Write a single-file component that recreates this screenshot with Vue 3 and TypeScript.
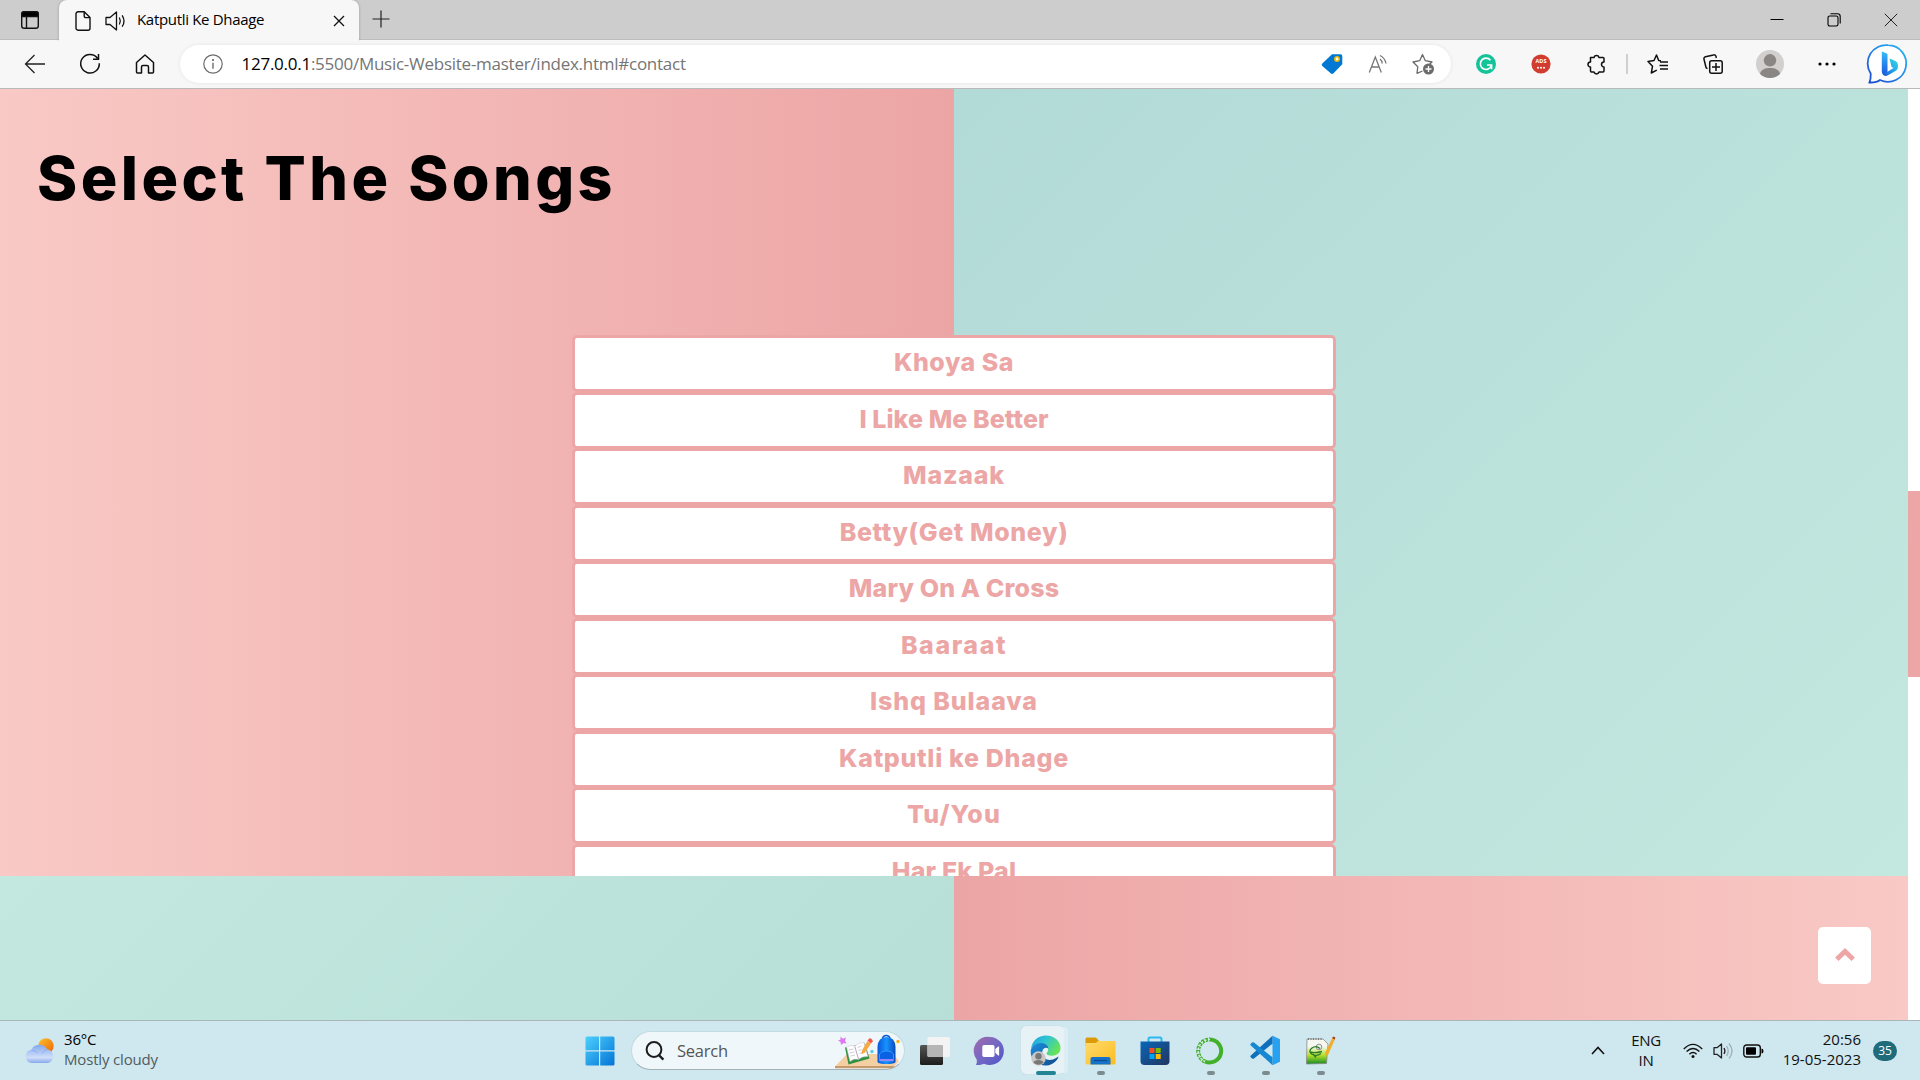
<script setup lang="ts">
interface Song {
  title: string
  spacing: number
}

const songs: Song[] = [
  { title: 'Khoya Sa', spacing: 0.5 },
  { title: 'I Like Me Better', spacing: 0.1 },
  { title: 'Mazaak', spacing: 0.8 },
  { title: 'Betty(Get Money)', spacing: 0.62 },
  { title: 'Mary On A Cross', spacing: 0.15 },
  { title: 'Baaraat', spacing: 1.6 },
  { title: 'Ishq Bulaava', spacing: 0.9 },
  { title: 'Katputli ke Dhage', spacing: 0.68 },
  { title: 'Tu/You', spacing: 1.1 },
  { title: 'Har Ek Pal', spacing: 0.2 },
]
</script>

<template>
  <div class="screen">
    <header class="tabs">
      <div class="tab-actions">
        <svg width="20" height="20" viewBox="0 0 20 20" fill="none" stroke="#111" stroke-width="1.4">
          <rect x="1.7" y="1.7" width="16.6" height="16.6" rx="2.6" />
          <path d="M1.7 6.5V4.2a2.5 2.5 0 0 1 2.5-2.5h11.6a2.5 2.5 0 0 1 2.5 2.5v2.3z" fill="#000" />
          <path d="M6.5 6v12" />
        </svg>
      </div>
      <div class="tab">
        <svg class="doc" width="16" height="20" viewBox="0 0 16 20" fill="none" stroke="#111" stroke-width="1.4" stroke-linejoin="round">
          <path d="M3 .8h6.2l5.8 5.8v10.6a2 2 0 0 1-2 2H3a2 2 0 0 1-2-2V2.8a2 2 0 0 1 2-2z" />
          <path d="M9.2.8v4.3a1.5 1.5 0 0 0 1.5 1.5H15" />
        </svg>
        <svg class="speaker" width="21" height="20" viewBox="0 0 21 20" fill="none" stroke="#111" stroke-width="1.3" stroke-linejoin="round" stroke-linecap="round">
          <path d="M1 6.5h4L11.5 1v18L5 13.5H1z" />
          <path d="M14.5 7q1.6 3 0 6M17.4 4.8q3.200 5.200 0 10.400" />
        </svg>
        <span class="tab-title">Katputli Ke Dhaage</span>
        <svg class="tab-close" width="12" height="12" viewBox="0 0 12 12" stroke="#111" stroke-width="1.3"><path d="M1 1l10 10M11 1L1 11" /></svg>
      </div>
      <svg class="new-tab" width="18" height="18" viewBox="0 0 18 18" stroke="#222" stroke-width="1.2"><path d="M9 .5v17M.5 9h17" /></svg>
      <div class="window-buttons">
        <svg width="14" height="14" viewBox="0 0 14 14" stroke="#000" stroke-width="1"><path d="M.5 6.500h13" /></svg>
        <svg width="14" height="14" viewBox="0 0 14 14" fill="none" stroke="#000" stroke-width="1.1">
          <rect x="1" y="3" width="10" height="10" rx="1.7" /><path d="M3.500.8H10.500a2.700 2.700 0 0 1 2.700 2.700V10.500" />
        </svg>
        <svg width="14" height="14" viewBox="0 0 14 14" stroke="#222" stroke-width="1"><path d="M.8.8l12.400 12.400M13.200.8L.8 13.200" /></svg>
      </div>
    </header>

    <nav class="toolbar">
      <div class="slot nav-slot">
        <svg width="22" height="20" viewBox="0 0 22 20" fill="none" stroke="#222" stroke-width="1.3"><path d="M10.500 1L1.500 10l9 9M1.500 10H21" /></svg>
      </div>
      <div class="slot nav-slot">
        <svg width="22" height="22" viewBox="0 0 22 22" fill="none" stroke="#111" stroke-width="1.5"><path d="M20.300 10.200A9.300 9.300 0 1 1 18.500 5.200M19.500 1v5.200h-5.500" /></svg>
      </div>
      <div class="slot nav-slot">
        <svg width="20" height="20" viewBox="0 0 20 20" fill="none" stroke="#111" stroke-width="1.5" stroke-linejoin="round"><path d="M1.500 8.500L10 1l8.500 7.500V18a1 1 0 0 1-1 1h-4v-6a1.500 1.500 0 0 0-1.500-1.500H8A1.500 1.500 0 0 0 6.500 13v6h-4a1 1 0 0 1-1-1z" /></svg>
      </div>
      <div class="address">
        <svg class="info" width="20" height="20" viewBox="0 0 20 20" fill="none" stroke="#6b6b6b" stroke-width="1.2">
          <circle cx="10" cy="10" r="9.200" /><path d="M10 8.800v6" stroke-width="1.400" /><circle cx="10" cy="6" r=".5" fill="#6b6b6b" />
        </svg>
        <span class="url"><b>127.0.0.1</b>:5500/Music-Website-master/index.html#contact</span>
        <div class="address-tools">
          <svg width="22" height="22" viewBox="0 0 22 22"><path d="M11 1.300h8.500a1.800 1.800 0 0 1 1.800 1.800v8.200L12.500 20.300a2 2 0 0 1-2.800 0L1.300 13a1.800 1.800 0 0 1 0-2.600z" fill="#0078d4" /><circle cx="16" cy="6" r="2.200" fill="#fff" stroke="#f2b600" stroke-width="1.600" /></svg>
          <svg width="20" height="20" viewBox="0 0 20 20" fill="none" stroke="#777" stroke-width="1.300"><path d="M1.300 18.500L7.300 3l6 15.500M3.500 13h7.700M12 5q2 1.500 2.200 4.500M12 1.500q5 2.500 6 8" /></svg>
          <svg width="22" height="22" viewBox="0 0 22 22" fill="none" stroke="#6b6b6b" stroke-width="1.300" stroke-linejoin="round">
            <path d="M10.500 18L5 20.300l.8-6.600L1 9l6.700-1.300L10.500 1.500l2.800 6.200L20 9l-2.500 2.200" /><circle cx="16.500" cy="16" r="5.500" fill="#6b6b6b" stroke="none" /><path d="M13.500 16h6M16.500 13v6" stroke="#fff" />
          </svg>
        </div>
      </div>
      <div class="extensions">
        <svg width="20" height="20" viewBox="0 0 20 20"><circle cx="10" cy="10" r="10" fill="#15c39a" /><path d="M14.500 6.200A5.700 5.700 0 1 0 15.500 11.500M11 11h4.600v4.200" fill="none" stroke="#fff" stroke-width="1.600" /></svg>
        <svg width="20" height="20" viewBox="0 0 20 20"><circle cx="10" cy="10" r="9.600" fill="#d23b30" /><text x="10" y="9.200" text-anchor="middle" class="ads">ADS</text><g fill="#fff"><circle cx="7" cy="13.700" r="1" /><circle cx="10" cy="13.700" r="1" /><circle cx="13" cy="13.700" r="1" /></g></svg>
        <svg width="21" height="21" viewBox="0 0 21 21" fill="none" stroke="#111" stroke-width="1.500" stroke-linejoin="round"><path d="M4.500 3.500H8a2.600 2.600 0 0 1 5 0h4a1 1 0 0 1 1 1V8a2.500 2.500 0 0 0 0 5v4a1 1 0 0 1-1 1h-4a2.600 2.600 0 0 1-5 0H5.500a1 1 0 0 1-1-1V13a2.500 2.500 0 0 1 0-5z" /></svg>
      </div>
      <i class="divider"></i>
      <div class="browser-tools">
        <svg width="22" height="20" viewBox="0 0 22 20" fill="none" stroke="#111" stroke-width="1.500" stroke-linejoin="round"><path d="M14 6.800l-2.300-.3L9.500 1 7 6.500 1 7.500l4.500 4.800L4.300 19l5.500-2.800M13 8h8M12.500 11.500H21M13 15h8" /></svg>
        <svg width="20" height="20" viewBox="0 0 20 20" fill="none" stroke="#111" stroke-width="1.500"><rect x="6.700" y="6.700" width="12.500" height="12.500" rx="2" /><path d="M13 9v8M9 13h8M4.500 14.500a2 2 0 0 1-1.600-1.500L1 5.200a2 2 0 0 1 1.500-2.500L10.500.9A2 2 0 0 1 13 2.400L13.300 4" /></svg>
        <svg width="28" height="28" viewBox="0 0 28 28"><circle cx="14" cy="14" r="14" fill="#d2d0ce" /><circle cx="14" cy="10.300" r="6.200" fill="#8a8683" /><path d="M4 24c1-5 5.500-6 10-6s9 1 10 6c-5.500 5.200-14.500 5.200-20 0z" fill="#8a8683" /></svg>
        <svg width="18" height="4" viewBox="0 0 18 4"><circle cx="2" cy="2" r="1.600" /><circle cx="9" cy="2" r="1.600" /><circle cx="16" cy="2" r="1.600" /></svg>
      </div>
      <svg class="bing" width="40" height="40" viewBox="0 0 40 40">
        <defs>
          <linearGradient id="ring" x1="1" y1="0" x2="0" y2="1"><stop offset="0" stop-color="#26b8f4" /><stop offset=".5" stop-color="#2584e8" /><stop offset="1" stop-color="#1b48cc" /></linearGradient>
          <linearGradient id="stem" x1="0" y1="0" x2="0" y2="1"><stop offset="0" stop-color="#35bdfb" /><stop offset="1" stop-color="#1b5be0" /></linearGradient>
          <linearGradient id="bow" x1="1" y1="0" x2="0" y2="1"><stop offset="0" stop-color="#3be0d8" /><stop offset=".5" stop-color="#20a4f0" /><stop offset="1" stop-color="#1d4bd0" /></linearGradient>
        </defs>
        <path d="M20 1.200a18.300 18.300 0 1 1-8 34.800c-3 2.500-6.500 2.600-10.500 2.500 1.500-3 1.200-6 1.200-9A18.300 18.300 0 0 1 20 1.200z" fill="#fff" stroke="url(#ring)" stroke-width="1.800" />
        <path d="M13.800 7.500l4.500 1.700c.8.300 1.200 1 1.200 1.700V28l-3 2c-1.600.2-2.700-1-2.700-2.500z" fill="url(#stem)" />
        <path d="M21.500 14.500l6 2.600a4.500 4.500 0 0 1 2.500 4v1.500c0 2-.8 3.200-2.200 4.200L19.500 31.500c-2.800 1.300-5-.5-5.500-3 1.800 1 3.600.4 5.500-.7l6-3.800-2-1.200z" fill="url(#bow)" />
      </svg>
    </nav>

    <main class="page">
      <div class="content">
        <section class="songs-section">
          <h1>Select The Songs</h1>
          <ul class="songs">
            <li v-for="song in songs" :key="song.title">
              <button><span :style="{ letterSpacing: song.spacing + 'px' }">{{ song.title }}</span></button>
            </li>
          </ul>
        </section>
        <section class="next-section"></section>
        <a class="to-top"><svg width="20" height="14" viewBox="0 0 20 14" fill="none" stroke="#eda6a6" stroke-width="4.800"><path d="M1.800 11.300L10 3.400l8.200 7.900" /></svg></a>
      </div>
      <div class="scrollbar"><div class="thumb"></div></div>
    </main>

    <footer class="taskbar">
      <div class="weather">
        <svg width="32" height="28" viewBox="0 0 32 28">
          <defs>
            <linearGradient id="sun" x1="0" y1="0" x2="1" y2="1"><stop offset="0" stop-color="#f9c22b" /><stop offset="1" stop-color="#f0620a" /></linearGradient>
            <linearGradient id="cloud" x1="0" y1="0" x2="0" y2="1"><stop offset="0" stop-color="#83a9ef" /><stop offset=".7" stop-color="#cfdef9" /><stop offset="1" stop-color="#87a9ec" /></linearGradient>
          </defs>
          <circle cx="22" cy="9" r="7.700" fill="url(#sun)" />
          <path d="M7.500 26a6.700 6.700 0 0 1-.3-13.200A9 9 0 0 1 23 12.200 7.100 7.100 0 0 1 24 26z" fill="url(#cloud)" />
          <path d="M7.500 13.500q4-.3 6 2.500M18 16.500q2-3.500 5.500-4" fill="none" stroke="#8eb0ef" />
        </svg>
        <div class="weather-text"><span>36°C</span><span class="muted">Mostly cloudy</span></div>
      </div>

      <div class="apps">
        <svg class="start" width="30" height="30" viewBox="0 0 30 30">
          <defs><linearGradient id="win" x1="0" y1="0" x2="1" y2="1"><stop offset="0" stop-color="#4cd0fd" /><stop offset="1" stop-color="#0473d6" /></linearGradient></defs>
          <path d="M2 .5h12v13.800H.5V2A1.500 1.500 0 0 1 2 .5zM15.200.5H28A1.500 1.500 0 0 1 29.500 2v12.300H15.200zM.5 15.500H14v14H2A1.500 1.500 0 0 1 .5 28zM15.200 15.500h14.300V28a1.500 1.500 0 0 1-1.500 1.500H15.200z" fill="url(#win)" />
        </svg>
        <div class="search">
          <svg class="lens" width="20" height="20" viewBox="0 0 20 20" fill="none" stroke="#1d1d1d" stroke-width="2"><circle cx="9" cy="8.500" r="7.400" /><path d="M13.800 14l4.600 4.700" stroke-width="2.400" /></svg>
          <span>Search</span>
          <svg class="desk" width="70" height="36" viewBox="0 0 70 36">
            <defs><linearGradient id="bag" x1="0" y1="0" x2="1" y2="0"><stop offset="0" stop-color="#0b57d8" /><stop offset=".5" stop-color="#1693ff" /><stop offset="1" stop-color="#0a48b9" /></linearGradient></defs>
            <path d="M1 33.500L13 21h46l6 7-5 5.500z" fill="#f3cfa3" /><path d="M1 33h60l-3 2.300H1z" fill="#c79a6c" />
            <path d="M11 14.500l20-4 4.500 15-21 6z" fill="#2e9140" /><path d="M12.500 14q5-2.500 8.500-1 4-4 9-3.500l4 14q-6-.5-9.500 3-4-1.500-8.500 2z" fill="#fff" stroke="#c6bad4" stroke-width=".5" /><path d="M20.800 13.500l3.700 12.500" fill="none" stroke="#9a90ad" stroke-width=".8" /><path d="M14.500 17l5-1M15.500 20l5-1M16.500 23l4.500-1M23.500 14.500l4-1.500M24.500 17.500l3-1M25.500 20.500l5-1.500" fill="none" stroke="#c0b8cc" stroke-width=".7" />
            <path d="M28 17.500l5.500-9.500 3.500 2.400-6 9-3.500 1.800z" fill="#f7a940" /><path d="M33.500 7.500l2-2.200q3 .4 3.200 3L37 10.400z" fill="#ef5a50" />
            <path d="M6.500 3.500l2.300 2.300L12 4.500l-1 3.200 1.700 2.800-3.200-.6-2.500 2L6.600 9 4 7.500l2.600-1z" fill="#dd78f2" />
            <path d="M48.500 5a4 4 0 0 1 7.500 0" fill="none" stroke="#0c55c8" stroke-width="1.500" /><path d="M43.500 14q.5-10 9-10t9 10v15q-1 2-9 2t-9-2z" fill="url(#bag)" /><path d="M45.500 21q1.500-3 7-3t7 3v7H45.500z" fill="#0b61e4" stroke="#33a5ff" stroke-width=".8" /><path d="M46 27h13" stroke="#a68bff" stroke-width="1.800" />
            <circle cx="38" cy="18.500" r="1.700" fill="#53cfe4" /><circle cx="64" cy="8.500" r="1.700" fill="#ffad12" />
          </svg>
        </div>
        <div class="app">
          <svg width="30" height="30" viewBox="0 0 30 30"><defs><linearGradient id="tv" x1="0" y1="0" x2="0" y2="1"><stop offset="0" stop-color="#555" /><stop offset="1" stop-color="#1d1d1d" /></linearGradient></defs><rect x="0" y="9" width="23" height="20" rx="1.500" fill="url(#tv)" /><rect x="7.500" y="1" width="22.500" height="20" rx="1.500" fill="#f3f3f3" /><path d="M7.500 9H22a1 1 0 0 1 1 1v11H9a1.500 1.500 0 0 1-1.500-1.500z" fill="#b5b5b5" /></svg>
        </div>
        <div class="app">
          <svg width="30" height="30" viewBox="0 0 30 30"><defs><linearGradient id="chat" x1="0" y1="0" x2="1" y2="1"><stop offset="0" stop-color="#a36ba9" /><stop offset=".5" stop-color="#7468c4" /><stop offset="1" stop-color="#4d55c7" /></linearGradient></defs><path d="M15 1a14 14 0 1 1-6 26.700c-2.500 1.100-5 1.600-8 1.300.9-2 1-3.300.7-5.500A14 14 0 0 1 15 1z" fill="url(#chat)" /><rect x="7.300" y="9" width="12.200" height="12" rx="1.800" fill="#fff" /><path d="M20.300 13l3-2.600q.8-.3.800.5v8.200q0 .8-.8.5l-3-2.600z" fill="#fff" /></svg>
        </div>
        <div class="app active">
          <svg width="31" height="31" viewBox="0 0 31 31">
            <defs>
              <linearGradient id="edgeTop" x1="0" y1="0" x2="1" y2=".5"><stop offset="0" stop-color="#1aa0e0" /><stop offset=".5" stop-color="#30c5d0" /><stop offset="1" stop-color="#65e35a" /></linearGradient>
              <linearGradient id="edgeLow" x1="0" y1="0" x2="1" y2="1"><stop offset="0" stop-color="#1b90df" /><stop offset="1" stop-color="#114a8b" /></linearGradient>
            </defs>
            <path d="M1 14C2 5.500 8.500.6 16 .6c8.500 0 14.500 6 14.500 12.400 0 5-4 7.700-8.500 7.700-3.700 0-5.500-1.200-5.500-2.200 0-.8 1.700-1.500 1.700-4.200 0-3-3-5.500-7.500-5.500C6 8.800 2.500 11 1 14z" fill="url(#edgeTop)" />
            <path d="M.7 15.500C1.500 11 6 8 10.700 8c4.500 0 7.700 2.500 7.700 6-1.500-2-5-1.500-6 2-1.500 6 4 10.500 10.500 8.500 2.500-.8 4-2.200 5.500-3C29 23 24 30.500 16 30.500 6.500 30.500 0 23.500.7 15.500z" fill="url(#edgeLow)" />
            <circle cx="8.500" cy="23.500" r="7.200" fill="#c9c7c5" /><circle cx="8.500" cy="21.300" r="3.200" fill="#777" /><path d="M3.300 27.500q1-2.500 5.200-2.500t5.200 2.500q-5 4.500-10.400 0z" fill="#777" />
          </svg>
          <i class="mark wide"></i>
        </div>
        <div class="app">
          <svg width="31" height="28" viewBox="0 0 31 28"><defs><linearGradient id="folder" x1="0" y1="0" x2="1" y2="1"><stop offset="0" stop-color="#ffda6c" /><stop offset="1" stop-color="#fbbd22" /></linearGradient></defs><path d="M.5 2A1.500 1.500 0 0 1 2 .5h8q1 0 1.700.8L14 4v5H.5z" fill="#dd9a08" /><path d="M.5 6H10q1 0 1.700-.7L13 4h16.500a1 1 0 0 1 1 1v21a1.500 1.500 0 0 1-1.500 1.500H2A1.500 1.500 0 0 1 .5 26z" fill="url(#folder)" /><path d="M5.500 27.500V22a2 2 0 0 1 2-2h16a2 2 0 0 1 2 2v5.500z" fill="#1572c8" /><path d="M9 23.500h13" stroke="#0a4b92" stroke-width="1.200" /></svg>
          <i class="mark"></i>
        </div>
        <div class="app">
          <svg width="30" height="30" viewBox="0 0 30 30"><defs><linearGradient id="store" x1="0" y1="0" x2="1" y2="1"><stop offset="0" stop-color="#0867ba" /><stop offset="1" stop-color="#23345e" /></linearGradient></defs><path d="M8.500 6V3a1.500 1.500 0 0 1 1.500-1.500h10A1.500 1.500 0 0 1 21.500 3v3" fill="none" stroke="#2cb9ef" stroke-width="2" /><path d="M.5 5.500h29V25a4 4 0 0 1-4 4h-21a4 4 0 0 1-4-4z" fill="url(#store)" /><path d="M9.500 12h5v5h-5z" fill="#f25022" /><path d="M15.700 12h5v5h-5z" fill="#7fba00" /><path d="M9.500 18h5v5h-5z" fill="#00a4ef" /><path d="M15.700 18h5v5h-5z" fill="#ffb900" /></svg>
        </div>
        <div class="app">
          <svg width="28" height="28" viewBox="0 0 28 28" fill="none" stroke="#43b02a"><path d="M14 2.500a11.500 11.500 0 1 1-5 22" stroke-width="4" /><path d="M9 24.500A11.500 11.500 0 0 1 14 2.500" stroke-width="4" stroke-dasharray="2.800 1" /><path d="M9 24.500A11.500 11.500 0 0 1 14 2.500" stroke="#d6ede7" stroke-width="1.500" stroke-dasharray="2 1.700" /></svg>
          <i class="mark"></i>
        </div>
        <div class="app">
          <svg width="31" height="31" viewBox="0 0 31 31"><path d="M22.500.7L30 4.200v22.600l-7.500 3.500z" fill="#27a1f0" /><path d="M22.500.7v8L4 23.500q-1 .7-2 0L.8 22.300q-.9-1 0-1.900z" fill="#0e70bd" /><path d="M22.500 30.300v-8L4 7.500q-1-.7-2 0L.8 8.700q-.9 1 0 1.900z" fill="#1687d3" /></svg>
          <i class="mark"></i>
        </div>
        <div class="app">
          <svg width="30" height="30" viewBox="0 0 30 30"><defs><linearGradient id="note" x1="0" y1="0" x2="0" y2="1"><stop offset=".3" stop-color="#f6f8f0" /><stop offset=".65" stop-color="#b5e12c" /><stop offset="1" stop-color="#168c24" /></linearGradient></defs><path d="M2 3h16l5 5-1.500 19.500L1.500 28z" fill="url(#note)" stroke="#888" stroke-width=".8" /><path d="M3 3h15" stroke="#666" stroke-width="1.600" stroke-dasharray="1 1.500" /><circle cx="14" cy="11" r="2.800" fill="#f2f2f2" stroke="#777" stroke-width=".8" /><path d="M15 12.500q-4-3.500-8-.5t-.5 6q5 3 9.500-.5M5 16q5 1.500 12-.5M8 18l3 3.500" fill="none" stroke="#2c7a2b" stroke-width="1.400" /><path d="M27.500 1.500L20 17l.3 3.500 3-2.300L30 3z" fill="#efae2e" /><path d="M27.200 2L28.300.5l2 1-.5 2z" fill="#a4342b" /></svg>
          <i class="mark"></i>
        </div>
      </div>

      <div class="tray">
        <svg class="caret" width="14" height="9" viewBox="0 0 14 9" fill="none" stroke="#111" stroke-width="1.600"><path d="M1 8l6-6.500L13 8" /></svg>
        <div class="lang"><span>ENG</span><span>IN</span></div>
        <svg class="wifi" width="20" height="16" viewBox="0 0 20 16" fill="none" stroke="#111" stroke-width="1.400"><path d="M.8 6Q10-3.300 19.200 6M3.600 8.600q6.400-6.200 12.800 0M6.400 11.200q3.600-3.300 7.200 0" /><circle cx="10" cy="13.500" r="1.500" fill="#111" stroke="none" /></svg>
        <svg class="volume" width="21" height="18" viewBox="0 0 21 18" fill="none" stroke="#222" stroke-width="1.300" stroke-linejoin="round"><path d="M1 5.700h3L8.500 2v14L4 12.300H1zM11 6q1.800 3 0 6" /><path d="M13.500 4q3.500 5 0 10M16 1.500q6 7.500 0 15" stroke="#9eb1b6" /></svg>
        <svg class="battery" width="21" height="14" viewBox="0 0 21 14"><rect x=".8" y="1" width="16.500" height="12" rx="2.800" fill="none" stroke="#111" stroke-width="1.400" /><rect x="3" y="3.200" width="10" height="7.600" rx="1" /><path d="M18.500 4.500q2 0 2 2.500t-2 2.500z" /></svg>
        <div class="clock"><span>20:56</span><span>19-05-2023</span></div>
        <span class="badge">35</span>
      </div>
    </footer>
  </div>
</template>

<style>
body {
  margin: 0;
  overflow: hidden;
}
</style>

<style scoped>
.screen {
  display: flex;
  flex-direction: column;
  width: 1920px;
  height: 1080px;
  overflow: hidden;
  font-family: 'Open Sans', 'Noto Sans', sans-serif;
  color: #000;
}
svg {
  display: block;
  flex: none;
  overflow: visible;
}

.tabs {
  display: flex;
  flex: none;
  height: 40px;
  background: #cdcdcd;
  box-sizing: border-box;
  border-bottom: 1px solid #bdbdbd;
}
.tab-actions {
  display: flex;
  align-items: center;
  width: 59px;
  padding-left: 20px;
  box-sizing: border-box;
}
.tab {
  display: flex;
  align-items: center;
  width: 300px;
  height: 41px;
  box-sizing: border-box;
  border-radius: 8px 8px 0 0;
  background: #f7f7f7;
  box-shadow: 0 0 3px rgba(0, 0, 0, 0.25);
  clip-path: inset(0 -4px 0 -4px);
}
.doc {
  margin-left: 16px;
}
.speaker {
  margin-left: 14px;
}
.tab-title {
  width: 192px;
  margin: -3px 0 0 11px;
  font-size: 15px;
  line-height: 20px;
  letter-spacing: -0.32px;
  white-space: nowrap;
}
.tab-close {
  margin-left: 4px;
}
.new-tab {
  margin: 10px 0 0 13px;
}
.window-buttons {
  display: flex;
  align-items: center;
  gap: 43px;
  margin-left: auto;
  padding-right: 22px;
}

.toolbar {
  display: flex;
  flex: none;
  align-items: center;
  height: 49px;
  box-sizing: border-box;
  border-bottom: 1px solid #b9b9b9;
  background: #f7f7f7;
}
.slot {
  display: flex;
  justify-content: center;
  width: 55px;
}
.slot:first-child {
  margin-left: 7px;
}
.address {
  display: flex;
  align-items: center;
  width: 1271px;
  height: 38px;
  margin-left: 8px;
  border-radius: 19px;
  background: #fff;
  box-shadow: 0 0 4px rgba(0, 0, 0, 0.08);
}
.info {
  margin-left: 22.5px;
}
.url {
  margin: -2px 0 0 19px;
  font-size: 17px;
  letter-spacing: -0.26px;
  white-space: nowrap;
  color: #757575;
}
.url b {
  font-weight: 400;
  color: #000;
}
.address-tools {
  display: flex;
  align-items: center;
  gap: 24.5px;
  margin-left: auto;
  padding-right: 17px;
}
.extensions {
  display: flex;
  align-items: center;
  gap: 35px;
  margin-left: 25px;
}
.ads {
  font: 700 5.5px 'Open Sans', sans-serif;
  fill: #fff;
}
.divider {
  width: 2px;
  height: 20px;
  margin: 0 19px 0 19px;
  background: #cfcfcf;
}
.browser-tools {
  display: flex;
  align-items: center;
  gap: 34px;
}
.browser-tools svg:nth-child(3) {
  margin-left: -1px;
}
.bing {
  margin-left: 32px;
}

.page {
  display: flex;
  flex: none;
  height: 931px;
}
.content {
  position: relative;
  display: flex;
  flex-direction: column;
  width: 1908px;
}
.songs-section {
  flex: none;
  height: 787px;
  overflow: hidden;
  background:
    linear-gradient(90deg, #f9c9c5, #eca5a5) left / 50% 100% no-repeat,
    linear-gradient(135deg, #b2dad7, #c3e8df) right / 50% 100% no-repeat;
}
h1 {
  margin: 0;
  padding: 47px 0 0 37px;
  font: 800 61px/84px Inter, sans-serif;
  letter-spacing: 3.4px;
}
.songs {
  display: flex;
  flex-direction: column;
  width: 764px;
  margin: 115px auto 0;
  padding: 0;
  list-style: none;
}
.songs li {
  height: 56.5px;
}
.songs button {
  display: flex;
  align-items: center;
  justify-content: center;
  width: 100%;
  height: 57px;
  padding: 0 0 3px;
  box-sizing: border-box;
  border: 3px solid #eda6a6;
  border-radius: 5px;
  background: #fff;
  color: #eda6a6;
  font: 800 25px/38px Inter, sans-serif;
}
.next-section {
  flex: 1;
  background:
    linear-gradient(135deg, #c3e8df, #b7dfd8) left / 50% 100% no-repeat,
    linear-gradient(90deg, #eca5a5, #f9c9c5) right / 50% 100% no-repeat;
}
.to-top {
  position: absolute;
  right: 37px;
  bottom: 36px;
  display: flex;
  align-items: center;
  justify-content: center;
  width: 53px;
  height: 57px;
  padding-bottom: 2px;
  box-sizing: border-box;
  border-radius: 5px;
  background: #fff;
}
.scrollbar {
  width: 12px;
  background: #fff;
}
.thumb {
  height: 186px;
  margin-top: 402px;
  background: #eda6a6;
}

.taskbar {
  display: flex;
  flex: none;
  height: 60px;
  box-sizing: border-box;
  border-top: 1px solid #a9b7bb;
  background: #cfe7ee;
}
.weather {
  display: flex;
  width: 584px;
  padding-left: 24px;
  box-sizing: border-box;
}
.weather svg {
  margin-top: 16px;
}
.weather-text {
  display: flex;
  flex-direction: column;
  margin: 8px 0 0 8px;
  font-size: 15px;
  line-height: 20px;
  letter-spacing: -0.17px;
}
.muted {
  color: #505c60;
}
.apps {
  display: flex;
  align-items: center;
}
.start {
  margin-left: 0.5px;
}
.search {
  display: flex;
  align-items: center;
  width: 274px;
  height: 39px;
  margin: 0 2.5px 0 16.5px;
  box-sizing: border-box;
  border: 1px solid #c3dade;
  border-bottom-color: #a3b2b7;
  border-radius: 20px;
  background: #f0f7fa;
  color: #555;
  font-size: 16.5px;
  letter-spacing: -0.25px;
}
.lens {
  margin: 0 12px 0 13px;
}
.desk {
  margin-left: auto;
}
.app {
  position: relative;
  display: flex;
  align-items: center;
  justify-content: center;
  width: 55px;
  height: 49px;
}
.active::before {
  content: '';
  position: absolute;
  left: 3px;
  top: 0;
  width: 43px;
  height: 48px;
  border-radius: 5px;
  background: #e7f2f7;
  box-shadow: 5px 0 0 -1px #dcedf3, 0 0 1px #a9c4cc;
}
.app svg {
  position: relative;
}
.mark {
  position: absolute;
  bottom: 0;
  left: 24px;
  width: 8px;
  height: 4px;
  border-radius: 2px;
  background: #7b8b90;
}
.mark.wide {
  left: 18px;
  width: 20px;
  background: #228495;
}
.tray {
  display: flex;
  align-items: center;
  margin-left: auto;
  padding-right: 23px;
  color: #111;
  font-size: 15px;
  line-height: 20px;
}
.lang {
  display: flex;
  flex-direction: column;
  align-items: center;
  width: 40px;
  margin: -2px 0 0 21px;
  letter-spacing: -0.3px;
}
.wifi {
  margin-left: 17px;
}
.volume {
  margin-left: 10px;
}
.battery {
  margin-left: 9px;
}
.clock {
  display: flex;
  flex-direction: column;
  align-items: flex-end;
  width: 90px;
  margin: -3px 0 0 7px;
  letter-spacing: 0;
}
.badge {
  width: 24px;
  height: 20px;
  margin-left: 12px;
  border-radius: 10px;
  background: #1f6b79;
  color: #fff;
  font-size: 12px;
  line-height: 20px;
  text-align: center;
}
</style>
